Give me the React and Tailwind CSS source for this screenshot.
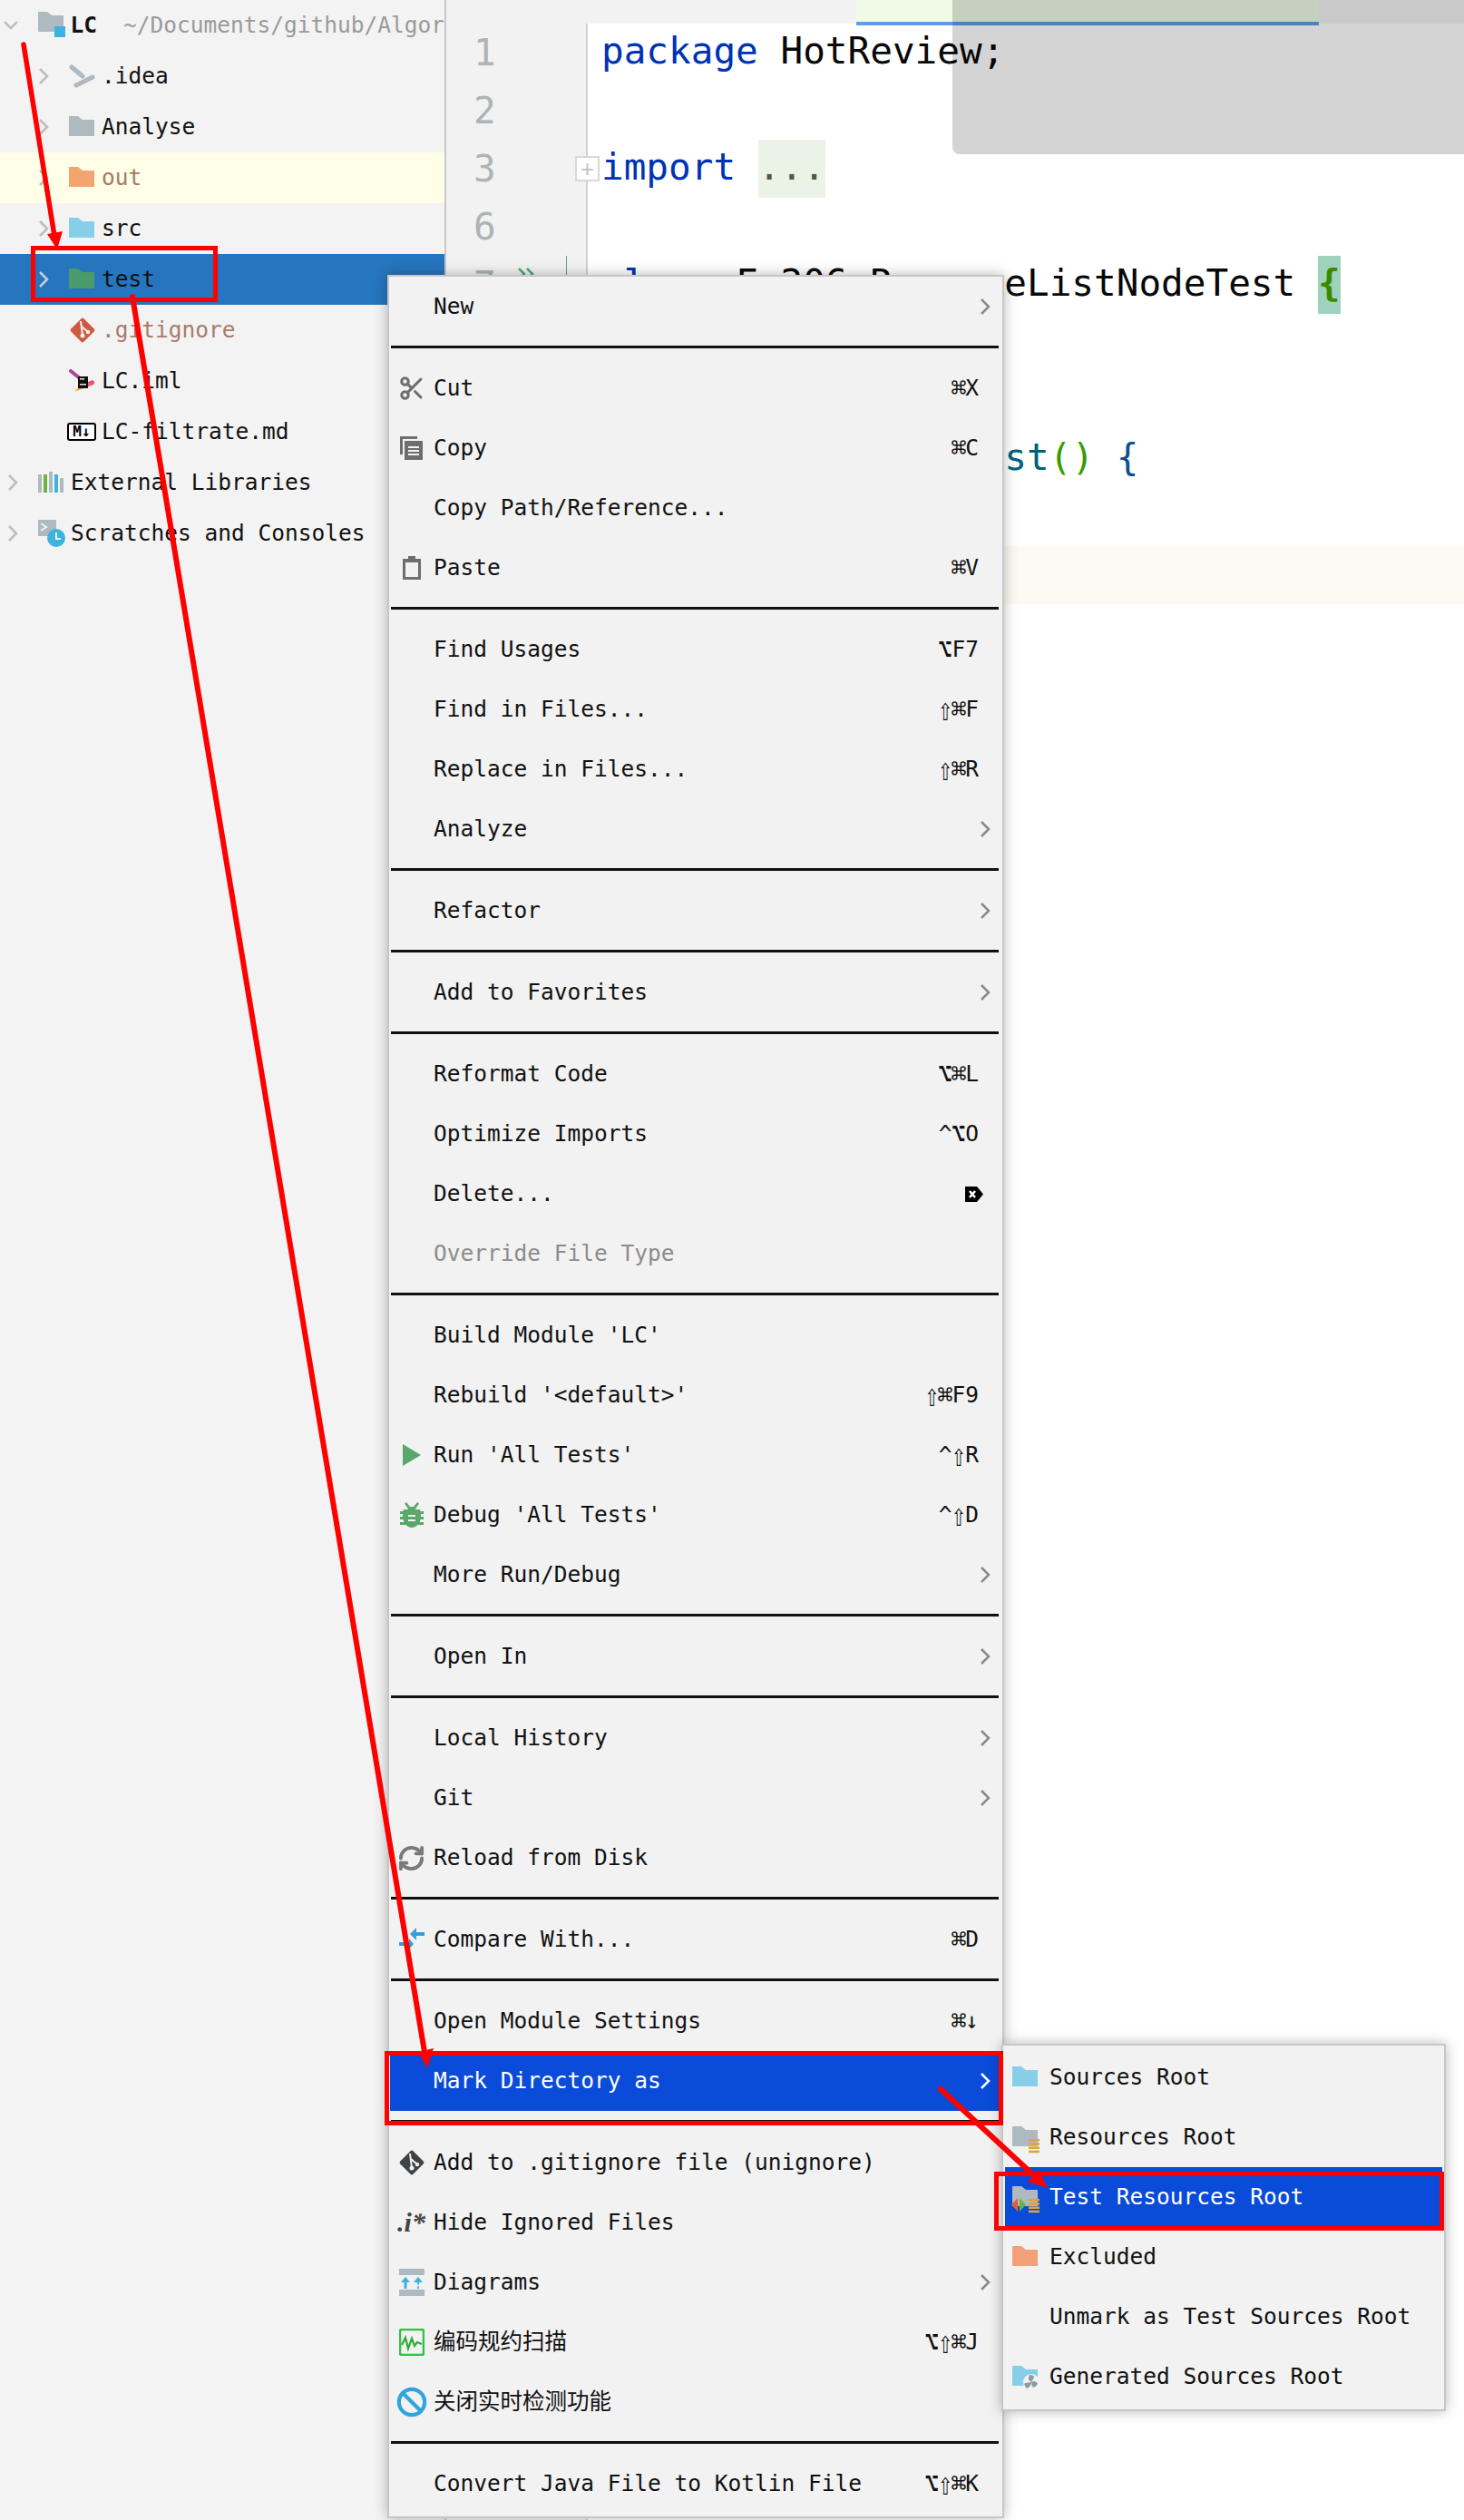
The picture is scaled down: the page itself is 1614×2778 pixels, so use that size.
import { Ban, RefreshCw, Scissors } from 'lucide-react';

const Chevron = ({ className = 'stroke-[#8a8a8a]' }) => (
  <svg width="12" height="20" viewBox="0 0 12 20" fill="none" className={className} strokeWidth="2.5">
    <path d="M2 2l8 8-8 8" />
  </svg>
);

const Folder = ({ color, children }) => (
  <svg width="30" height="24" viewBox="0 0 30 24" className="shrink-0 overflow-visible">
    <path d="M0 0h10l5 4h13v18H0z" fill={color} />
    {children}
  </svg>
);

const Stripes = () => (
  <g fill="#e0a43a">
    <rect x="18" y="14" width="12" height="2.6" />
    <rect x="18" y="18.2" width="12" height="2.6" />
    <rect x="18" y="22.4" width="12" height="2.6" />
    <rect x="18" y="26.6" width="12" height="2.6" />
  </g>
);

const GitIcon = ({ color }) => (
  <svg width="30" height="30" viewBox="0 0 30 30">
    <rect x="5" y="5" width="20" height="20" rx="2" transform="rotate(45 15 15)" fill={color} />
    <path d="M13 5l2 16M14 11l7 6" stroke="#f2f2f2" strokeWidth="2" fill="none" />
    <circle cx="15" cy="21" r="2.5" fill="#f2f2f2" />
    <circle cx="21" cy="17" r="2.2" fill="#f2f2f2" />
  </svg>
);

const ImlIcon = () => (
  <svg width="30" height="26" viewBox="0 0 30 26">
    <defs>
      <linearGradient id="iml" x1="0" y1="1" x2="1" y2="0">
        <stop offset="0" stopColor="#fbd51e" />
        <stop offset="0.5" stopColor="#f5703f" />
        <stop offset="1" stopColor="#f0408a" />
      </linearGradient>
    </defs>
    <path d="M2 2l10 8" stroke="#b1468f" strokeWidth="4" strokeLinecap="round" />
    <path d="M6 25l6-7 14-6q4 2 1 5z" fill="url(#iml)" />
    <rect x="10" y="8" width="11" height="13" fill="#111" />
    <rect x="12" y="10" width="5" height="1.5" fill="#eee" />
    <rect x="12" y="16" width="7" height="1.5" fill="#eee" />
  </svg>
);

const IdeaIcon = () => (
  <svg width="30" height="26" viewBox="0 0 30 26" fill="none" stroke="#aeb9c0" strokeWidth="5" strokeLinecap="round">
    <path d="M3 3l12 10" />
    <path d="M8 23l18-9" />
  </svg>
);

const ModuleIcon = () => (
  <svg width="30" height="30" viewBox="0 0 30 30" className="overflow-visible">
    <path d="M0 0h10l5 4h13v18H0z" fill="#aeb9c0" />
    <rect x="18" y="16" width="12" height="12" fill="#3db3e0" />
  </svg>
);

const MdIcon = () => (
  <div className="-ml-[2px] flex h-[20px] w-[32px] items-center justify-center rounded-[3px] border-2 border-black bg-white text-[16px] leading-none font-bold text-black">
    M↓
  </div>
);

const LibIcon = () => (
  <svg width="28" height="24" viewBox="0 0 28 24">
    <rect x="0" y="3" width="4" height="20" fill="#aeb9c0" />
    <rect x="6" y="3" width="4" height="20" fill="#6cb33f" />
    <rect x="12" y="0" width="4" height="23" fill="#aeb9c0" />
    <rect x="18" y="3" width="4" height="20" fill="#3db3e0" />
    <rect x="24" y="7" width="4" height="16" fill="#aeb9c0" />
  </svg>
);

const ScratchIcon = () => (
  <svg width="30" height="30" viewBox="0 0 30 30">
    <rect x="0" y="0" width="20" height="18" fill="#aeb9c0" />
    <path d="M3 4l6 4-6 4" stroke="#f2f2f2" strokeWidth="2" fill="none" />
    <circle cx="20" cy="20" r="10" fill="#3db3e0" />
    <path d="M20 14v7h5" stroke="#f2f2f2" strokeWidth="2" fill="none" />
  </svg>
);

const CopyIcon = () => (
  <svg width="26" height="26" viewBox="0 0 26 26" fill="#6e6e6e">
    <path d="M0 0h19v3H3v17H0z" />
    <path d="M5 5h20v21H5z" />
    <path d="M9 11h12v2H9zM9 15h12v2H9zM9 19h12v2H9z" fill="#f2f2f2" />
  </svg>
);

const PasteIcon = () => (
  <svg width="22" height="26" viewBox="0 0 22 26">
    <path d="M7 0h8v3h6v23H1V3h6z" fill="#6e6e6e" />
    <rect x="4" y="7" width="14" height="16" fill="#f2f2f2" />
  </svg>
);

const RunIcon = () => (
  <svg width="20" height="24" viewBox="0 0 20 24">
    <path d="M0 0l20 12L0 24z" fill="#59a869" />
  </svg>
);

const BugIcon = () => (
  <svg width="26" height="28" viewBox="0 0 26 28" fill="#59a869">
    <path d="M7 0l4 5h4l4-5 2 1.500-4 6V9H9V7.500l-4-6z" />
    <path d="M4 8h18q2 7 0 13-3 7-9 7t-9-7q-2-6 0-13z" />
    <path d="M0 10h5v3H0zM21 10h5v3h-5zM0 16h5v3H0zM21 16h5v3h-5zM0 22h6v3H0zM20 22h6v3h-6z" />
    <path d="M9 14h8v2H9zM9 19h8v2H9z" fill="#f2f2f2" />
  </svg>
);

const CompareIcon = () => (
  <svg width="28" height="28" viewBox="0 0 28 28" fill="#389fd6">
    <path d="M12 8l7-7v5h9v4h-9v5z" />
    <path d="M0 17h11v-4l5 6-5 6v-4H0z" />
  </svg>
);

const DiagramIcon = () => (
  <svg width="28" height="30" viewBox="0 0 28 30">
    <rect x="0" y="0" width="28" height="7" fill="#aeb9c0" />
    <rect x="0" y="23" width="28" height="7" fill="#aeb9c0" />
    <path d="M7 22V13" stroke="#3db3e0" strokeWidth="3" fill="none" />
    <path d="M2 15l5-6 5 6z" fill="#3db3e0" />
    <path d="M21 22v-9" stroke="#3db3e0" strokeWidth="2" strokeDasharray="2.500 2" fill="none" />
    <path d="M16 15l5-6 5 6z" fill="#3db3e0" />
  </svg>
);

const ScanIcon = () => (
  <svg width="28" height="30" viewBox="0 0 28 30" fill="none">
    <rect x="1" y="1" width="26" height="28" rx="2" stroke="#2fc23f" strokeWidth="2.500" />
    <path d="M3 18l4-8 3 12 4-11 3 8 3-4 5 2" stroke="#2fa83a" strokeWidth="2.200" />
  </svg>
);

const DeleteGlyph = () => (
  <svg width="20" height="17" viewBox="0 0 20 17">
    <path d="M0 0h13l7 8.500-7 8.500H0z" fill="#000" />
    <path d="M5 5l6 7M11 5l-6 7" stroke="#fff" strokeWidth="2.500" />
  </svg>
);

const DoubleChevron = () => (
  <svg width="20" height="14" viewBox="0 0 20 14" fill="none" stroke="#59a869" strokeWidth="2.500">
    <path d="M2 1l6 6-6 6M11 1l6 6-6 6" />
  </svg>
);

const GeneratedIcon = () => (
  <Folder color="#87cfe9">
    <circle cx="21" cy="18" r="9" fill="#f2f2f2" />
    <g fill="#8f9aa3">
      <path d="M21 18q-5-3-2-8 5 0 5 3z" />
      <path d="M21 18q5-3 7 2-3 5-6 3z" />
      <path d="M21 18q0 5-5 7-4-4-2-6z" />
    </g>
  </Folder>
);

const TestResIcon = () => (
  <Folder color="#aeb9c0">
    <path d="M-1 20.500L6 13v15z" fill="#e2622b" />
    <path d="M8 13l7 7.500-7 7.500z" fill="#62b543" />
    <Stripes />
  </Folder>
);

// mac modifier glyphs sit taller than the mono font draws them
const KeyText = ({ keys }) => (
  <span className="flex">
    {[...keys].map((ch, i) => {
      if (ch === '⌘') {
        return (
          <span key={i} className="flex w-[14.75px] justify-center text-[29px] leading-[30px]">
            {ch}
          </span>
        );
      }
      if (ch === '⇧' || ch === '⌥') {
        return (
          <span key={i} className="flex w-[14.75px] scale-y-[1.35] justify-center text-[26px] leading-[30px]">
            {ch}
          </span>
        );
      }
      return (
        <span key={i} className="leading-[30px]">
          {ch}
        </span>
      );
    })}
  </span>
);

const treeRows = [
  { label: '.idea', icon: <IdeaIcon />, depth: 1, arrow: true },
  { label: 'Analyse', icon: <Folder color="#aeb9c0" />, depth: 1, arrow: true },
  { label: 'out', icon: <Folder color="#f4a46f" />, depth: 1, arrow: true, bg: 'bg-[#feffe6]', text: 'text-[#a47b62]' },
  { label: 'src', icon: <Folder color="#87cfe9" />, depth: 1, arrow: true },
  { label: 'test', icon: <Folder color="#4a9a6b" />, depth: 1, arrow: true, bg: 'bg-[#2675bf]', selected: true },
  { label: '.gitignore', icon: <GitIcon color="#cf5a43" />, depth: 1, text: 'text-[#a87b6a]' },
  { label: 'LC.iml', icon: <ImlIcon />, depth: 1 },
  { label: 'LC-filtrate.md', icon: <MdIcon />, depth: 1 },
  { label: 'External Libraries', icon: <LibIcon />, depth: 0, arrow: true },
  { label: 'Scratches and Consoles', icon: <ScratchIcon />, depth: 0, arrow: true },
];

const menuGroups = [
  [{ label: 'New', more: true }],
  [
    { label: 'Cut', key: '⌘X', icon: <Scissors size={30} color="#6e6e6e" strokeWidth={2.4} /> },
    { label: 'Copy', key: '⌘C', icon: <CopyIcon /> },
    { label: 'Copy Path/Reference...' },
    { label: 'Paste', key: '⌘V', icon: <PasteIcon /> },
  ],
  [
    { label: 'Find Usages', key: '⌥F7' },
    { label: 'Find in Files...', key: '⇧⌘F' },
    { label: 'Replace in Files...', key: '⇧⌘R' },
    { label: 'Analyze', more: true },
  ],
  [{ label: 'Refactor', more: true }],
  [{ label: 'Add to Favorites', more: true }],
  [
    { label: 'Reformat Code', key: '⌥⌘L' },
    { label: 'Optimize Imports', key: '^⌥O' },
    { label: 'Delete...', glyph: true },
    { label: 'Override File Type', disabled: true },
  ],
  [
    { label: "Build Module 'LC'" },
    { label: "Rebuild '<default>'", key: '⇧⌘F9' },
    { label: "Run 'All Tests'", key: '^⇧R', icon: <RunIcon /> },
    { label: "Debug 'All Tests'", key: '^⇧D', icon: <BugIcon /> },
    { label: 'More Run/Debug', more: true },
  ],
  [{ label: 'Open In', more: true }],
  [
    { label: 'Local History', more: true },
    { label: 'Git', more: true },
    { label: 'Reload from Disk', icon: <RefreshCw size={31} color="#7a7a7a" strokeWidth={3} /> },
  ],
  [{ label: 'Compare With...', key: '⌘D', icon: <CompareIcon /> }],
  [
    { label: 'Open Module Settings', key: '⌘↓' },
    { label: 'Mark Directory as', more: true, active: true },
  ],
  [
    { label: 'Add to .gitignore file (unignore)', icon: <GitIcon color="#3e4347" /> },
    {
      label: 'Hide Ignored Files',
      icon: <span className="font-['Liberation_Serif',serif] text-[30px] leading-none font-bold text-[#444] italic">.i*</span>,
    },
    { label: 'Diagrams', more: true, icon: <DiagramIcon /> },
    { label: '编码规约扫描', key: '⌥⇧⌘J', icon: <ScanIcon /> },
    { label: '关闭实时检测功能', icon: <Ban size={34} color="#2fa5e0" strokeWidth={3} /> },
  ],
  [{ label: 'Convert Java File to Kotlin File', key: '⌥⇧⌘K' }],
];

const subRows = [
  { label: 'Sources Root', icon: <Folder color="#87cfe9" /> },
  { label: 'Resources Root', icon: <Folder color="#aeb9c0"><Stripes /></Folder> },
  { label: 'Test Resources Root', icon: <TestResIcon />, active: true },
  { label: 'Excluded', icon: <Folder color="#f2a077" /> },
  { label: 'Unmark as Test Sources Root' },
  { label: 'Generated Sources Root', icon: <GeneratedIcon /> },
];

const TreeRow = ({ row }) => (
  <div className={`flex h-14 items-center ${row.depth ? 'pl-[42px]' : 'pl-[8px]'} ${row.bg || ''}`}>
    <div className="w-[34px]">
      {row.arrow && <Chevron className={row.selected ? 'stroke-[#c6cfdb]' : 'stroke-[#bdbdbd]'} />}
    </div>
    <div className="w-[36px]">{row.icon}</div>
    <span className={row.text || 'text-[#111]'}>{row.label}</span>
  </div>
);

const MenuRow = ({ item }) => (
  <div
    className={`flex items-center ${
      item.active ? 'mt-[3px] mr-[4px] ml-px h-[63px] bg-[#0a4bd9] pb-[3px] text-white' : 'h-[66px]'
    } ${item.disabled ? 'text-[#8c8c8c]' : ''}`}
  >
    <div className={`flex justify-center ${item.active ? 'w-[48px]' : 'w-[49px]'}`}>{item.icon}</div>
    <span className="flex-1">{item.label}</span>
    {item.key && (
      <div className="mr-[26px]">
        <KeyText keys={item.key} />
      </div>
    )}
    {item.glyph && (
      <div className="mr-[21px]">
        <DeleteGlyph />
      </div>
    )}
    {item.more && (
      <div className={`flex ${item.active ? 'mr-[9px]' : 'mr-[13px]'}`}>
        <Chevron className={item.active ? 'stroke-white' : 'stroke-[#8a8a8a]'} />
      </div>
    )}
  </div>
);

const ContextMenu = () => (
  <div className="absolute top-[303px] left-[427px] z-20 h-[2473px] w-[680px] border-2 border-[#c6c6c6] bg-[#f2f2f2] text-[#111] shadow-[0_0_14px_rgba(0,0,0,0.28)]">
    {menuGroups.map((group, i) => (
      <div key={i}>
        {i > 0 && (
          <div className="flex h-6 items-center pr-[4px] pb-[1px] pl-[2px]">
            <div className="h-[3px] w-full bg-[#111]" />
          </div>
        )}
        {group.map((item) => (
          <MenuRow key={item.label} item={item} />
        ))}
      </div>
    ))}
  </div>
);

const SubMenu = () => (
  <div className="absolute top-[2253px] left-[1104px] z-30 h-[405px] w-[490px] border-2 border-[#c6c6c6] bg-[#f2f2f2] pt-[2px] text-[#111] shadow-[0_0_14px_rgba(0,0,0,0.28)]">
    {subRows.map((row) => (
      <div
        key={row.label}
        className={`mx-[2px] flex h-[66px] items-center pl-[8px] ${row.active ? 'bg-[#0a4bd9] text-white' : ''}`}
      >
        <div className="w-[41px]">{row.icon}</div>
        <span>{row.label}</span>
      </div>
    ))}
  </div>
);

const Gutter = () => (
  <div className="h-full w-[156px] border-r-2 border-[#d2d2d2] bg-[#f2f2f2] pl-[30px] text-[#aeb3b3]">
    <div className="h-16">1</div>
    <div className="h-16">2</div>
    <div className="relative h-16">
      3
      <div className="absolute top-[18px] -right-[15px] flex h-[28px] w-[27px] items-center justify-center border-2 border-[#d8d8d8] bg-white text-[24px] leading-none text-[#c4c4c4]">
        +
      </div>
    </div>
    <div className="h-16">6</div>
    <div className="relative h-16">
      7
      <div className="absolute top-0 right-[21px] h-[22px] w-px bg-[#6f9a80]" />
      <div className="absolute top-[13px] right-[56px] flex">
        <DoubleChevron />
      </div>
    </div>
  </div>
);

const Code = () => (
  <div className="flex-1 bg-white pl-[15px] leading-[61px] whitespace-pre text-[#080808]">
    <div className="h-16">
      <span className="text-[#0033b3]">package</span> HotReview;
    </div>
    <div className="h-16" />
    <div className="h-16">
      <span className="text-[#0033b3]">import</span> <span className="inline-block h-16 bg-[#eaf3e6] text-[#4a5a4a]">...</span>
    </div>
    <div className="h-16" />
    <div className="h-16">
      <span className="text-[#0033b3]">class</span> F_206_ReverseListNodeTest{' '}
      <span className="inline-block h-16 bg-[#9fd2bd] font-bold text-[#3a8a00]">{'{'}</span>
    </div>
    <div className="h-16" />
    <div className="h-16 text-[#9e880d]">    @Test</div>
    <div className="h-16">
      {'    '}
      <span className="text-[#0033b3]">public void</span> <span className="text-[#00627a]">test</span>
      <span className="text-[#3a9a00]">()</span> <span className="text-[#0f4f8f]">{'{'}</span>
    </div>
    <div className="h-16" />
    <div className="h-16 bg-[#fbfaf0]" />
  </div>
);

const Annotations = () => (
  <svg
    width="1614"
    height="2778"
    viewBox="0 0 1614 2778"
    className="pointer-events-none absolute top-0 left-0 z-40"
    fill="none"
    stroke="#fe0000"
  >
    <rect x="36.500" y="273.500" width="201" height="57" strokeWidth="5" />
    <rect x="426.500" y="2263.500" width="677" height="77" strokeWidth="5" />
    <rect x="1098.500" y="2396.500" width="491" height="60" strokeWidth="5" />
    <path d="M26 49L60 260" strokeWidth="5.500" strokeLinecap="round" />
    <path d="M63 275L52 258L69 255z" fill="#fe0000" stroke="none" />
    <path d="M146 327L468 2262" strokeWidth="6" strokeLinecap="round" />
    <path d="M471 2280L461 2262L478 2258z" fill="#fe0000" stroke="none" />
    <path d="M1037 2303L1145 2403" strokeWidth="6" strokeLinecap="round" />
    <path d="M1155 2412L1133 2405L1145 2392z" fill="#fe0000" stroke="none" />
  </svg>
);

export default function App() {
  return (
    <div className="relative flex h-[2778px] w-[1614px] overflow-hidden bg-white font-['DejaVu_Sans_Mono','Noto_Sans_CJK_SC',monospace] text-[24.5px]">
      <aside className="h-full w-[492px] shrink-0 border-r-2 border-[#c9c9c9] bg-[#f3f3f3]">
        <div className="flex h-14 items-center pl-[4px] whitespace-pre">
          <svg width="16" height="10" viewBox="0 0 16 10" fill="none" stroke="#bdbdbd" strokeWidth="2.5" className="mr-[22px]">
            <path d="M1 1l7 7 7-7" />
          </svg>
          <div className="w-[36px]">
            <ModuleIcon />
          </div>
          <span className="font-bold text-[#111]">LC</span>
          <span className="ml-[29px] text-[#9a9a9a]">~/Documents/github/Algor</span>
        </div>
        {treeRows.map((row) => (
          <TreeRow key={row.label} row={row} />
        ))}
      </aside>

      <main className="flex h-full flex-1 flex-col text-[41px] leading-16">
        <div className="h-[26px] shrink-0 bg-[#f2f2f2]">
          <div className="relative z-10 ml-[452px] h-[28px] w-[510px] border-b-4 border-[#5a9fe6] bg-[#eefbe6]" />
        </div>
        <div className="flex flex-1">
          <Gutter />
          <Code />
        </div>
      </main>

      <div className="absolute top-0 left-[1050px] z-10 h-[170px] w-[564px] rounded-bl-[8px] bg-black/[0.17]" />

      <ContextMenu />
      <SubMenu />
      <Annotations />
    </div>
  );
}
